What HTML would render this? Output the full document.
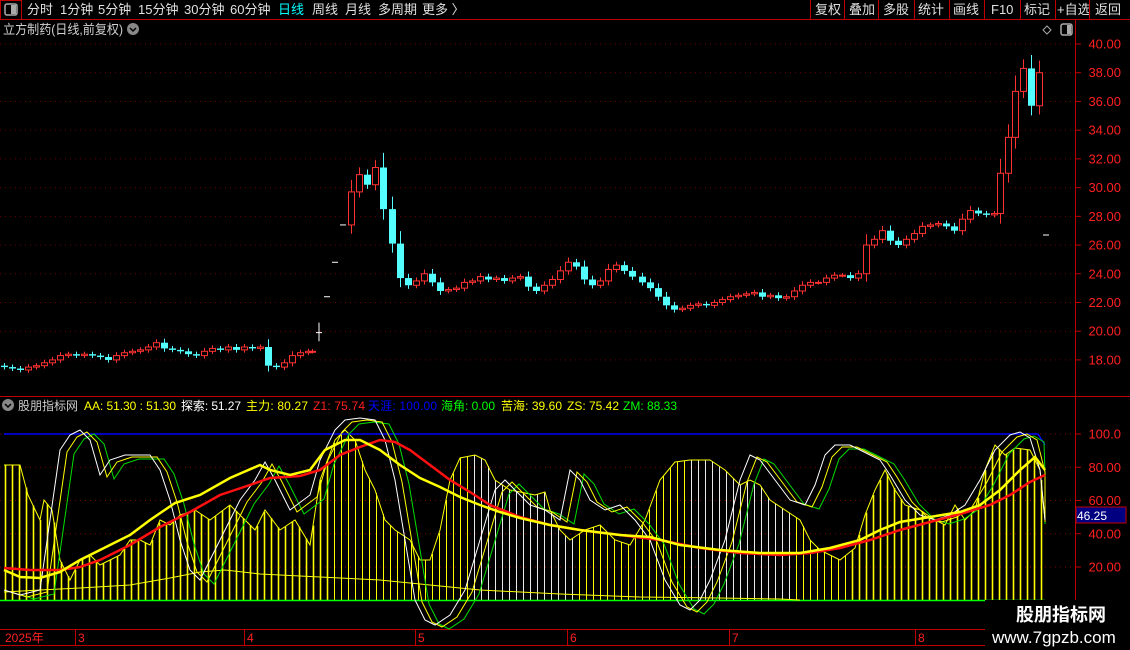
<!DOCTYPE html><html><head><meta charset="utf-8"><style>
body{margin:0;background:#000;width:1130px;height:650px;overflow:hidden;font-family:"Liberation Sans","Noto Sans CJK SC",sans-serif;}
svg{display:block}
text{font-family:"Liberation Sans","Noto Sans CJK SC",sans-serif}
</style></head><body>
<svg id="s" width="1130" height="650" xmlns="http://www.w3.org/2000/svg">
<rect width="1130" height="650" fill="#000"/>
<line x1="0" y1="19.5" x2="1130" y2="19.5" stroke="#c00000"/>
<rect x="0.5" y="0.5" width="21" height="19" fill="none" stroke="#c00000"/>
<rect x="5" y="4" width="12" height="11" rx="2" fill="none" stroke="#aaa" stroke-width="1.5"/><rect x="11" y="5" width="5" height="9" fill="#aaa"/>
<g font-size="13" fill="#e0e0e0">
<text x="27" y="14">分时</text><text x="60" y="14">1分钟</text><text x="98" y="14">5分钟</text><text x="138" y="14">15分钟</text><text x="184" y="14">30分钟</text><text x="230" y="14">60分钟</text>
<text x="278" y="14" fill="#00ffff">日线</text><text x="312" y="14">周线</text><text x="345" y="14">月线</text><text x="378" y="14">多周期</text><text x="422" y="14">更多 〉</text>
<text x="815" y="14">复权</text><text x="849" y="14">叠加</text><text x="883" y="14">多股</text><text x="918" y="14">统计</text><text x="953" y="14">画线</text><text x="991" y="14">F10</text><text x="1024" y="14">标记</text><text x="1057" y="14">+自选</text><text x="1095" y="14">返回</text>
</g>
<g stroke="#c00000"><line x1="810.5" y1="0" x2="810.5" y2="19"/><line x1="844.5" y1="0" x2="844.5" y2="19"/><line x1="878.5" y1="0" x2="878.5" y2="19"/><line x1="914.5" y1="0" x2="914.5" y2="19"/><line x1="949.5" y1="0" x2="949.5" y2="19"/><line x1="984.5" y1="0" x2="984.5" y2="19"/><line x1="1020.5" y1="0" x2="1020.5" y2="19"/><line x1="1055.5" y1="0" x2="1055.5" y2="19"/><line x1="1089.5" y1="0" x2="1089.5" y2="19"/></g>
<line x1="1075.5" y1="20" x2="1075.5" y2="630" stroke="#c00000"/>
<line x1="0" y1="396.5" x2="1130" y2="396.5" stroke="#c00000"/>
<line x1="0" y1="629.5" x2="1130" y2="629.5" stroke="#c00000"/>
<line x1="0" y1="645.5" x2="1075" y2="645.5" stroke="#c00000"/>
<text x="3" y="34" font-size="13" fill="#d0d0d0" textLength="120" lengthAdjust="spacingAndGlyphs">立方制药(日线,前复权)</text>
<circle cx="133" cy="29" r="6" fill="#888"/><path d="M130 28l3 3 3-3" stroke="#000" stroke-width="1.5" fill="none"/>
<path d="M1047 26l4 4-4 4-4-4z" fill="none" stroke="#aaa"/>
<rect x="1061" y="24" width="11" height="11" rx="2" fill="none" stroke="#aaa" stroke-width="1.5"/><rect x="1067" y="25" width="4" height="9" fill="#aaa"/>
<circle cx="8" cy="405" r="6" fill="#888"/><path d="M5 404l3 3 3-3" stroke="#000" stroke-width="1.5" fill="none"/>
<g font-size="12">
<text x="18" y="410" fill="#ccc" textLength="60">股朋指标网</text>
<text x="84" y="410" fill="#ffff00" textLength="92">AA: 51.30 : 51.30</text>
<text x="181" y="410" fill="#fff" textLength="60">探索: 51.27</text>
<text x="246" y="410" fill="#ffff00" textLength="62">主力: 80.27</text>
<text x="313" y="410" fill="#ff2020" textLength="52">Z1: 75.74</text>
<text x="368" y="410" fill="#0000ff" textLength="69">天涯: 100.00</text>
<text x="441" y="410" fill="#00ff00" textLength="54">海角: 0.00</text>
<text x="501" y="410" fill="#ffff00" textLength="61">苦海: 39.60</text>
<text x="567" y="410" fill="#ffff00" textLength="52">ZS: 75.42</text>
<text x="623" y="410" fill="#00ff00" textLength="54">ZM: 88.33</text>
</g>
<g id="g"></g>
<rect x="1076" y="507" width="50" height="16" fill="#000080" stroke="#c00000"/>
<text x="1077" y="520" font-size="12" fill="#fff">46.25</text>
<g font-size="12" fill="#ff2020"><text x="5" y="642">2025年</text><text x="78" y="642">3</text><text x="247" y="642">4</text><text x="418" y="642">5</text><text x="570" y="642">6</text><text x="732" y="642">7</text><text x="918" y="642">8</text></g>
<g stroke="#c00000"><line x1="75.5" y1="630" x2="75.5" y2="645"/><line x1="244.5" y1="630" x2="244.5" y2="645"/><line x1="415.5" y1="630" x2="415.5" y2="645"/><line x1="567.5" y1="630" x2="567.5" y2="645"/><line x1="729.5" y1="630" x2="729.5" y2="645"/><line x1="915.5" y1="630" x2="915.5" y2="645"/></g>
<rect x="985" y="600" width="145" height="50" fill="#000"/>
<text x="1016" y="621" font-size="18" font-weight="bold" fill="#fff">股朋指标网</text>
<text x="992" y="643" font-size="17" fill="#fff">www.7gpzb.com</text>
</svg>
<script>
var g=document.getElementById('g'),h='';
function py(p){return 44+(40-p)*14.36}
function iy(v){return 600.25-v*1.6625}
for(var p=40;p>=18;p-=2){var y=py(p);h+='<line x1="0" y1="'+y+'" x2="1075" y2="'+y+'" stroke="#600" stroke-dasharray="1,4"/>';h+='<line x1="1075" y1="'+y+'" x2="1081" y2="'+y+'" stroke="#c00000"/>';h+='<text x="1121" y="'+(y+4.5)+'" font-size="13" fill="#ff2020" text-anchor="end">'+p.toFixed(2)+'</text>'}
[100,80,60,40,20].forEach(function(v){var y=iy(v);h+='<line x1="0" y1="'+y+'" x2="1075" y2="'+y+'" stroke="#700" stroke-dasharray="1,4"/>';h+='<line x1="1075" y1="'+y+'" x2="1081" y2="'+y+'" stroke="#c00000"/>';h+='<text x="1121" y="'+(y+4.5)+'" font-size="13" fill="#ff2020" text-anchor="end">'+(v==100?'100.0':v.toFixed(2))+'</text>'});
var c=[[4,17.5],[12,17.4],[20,17.3],[28,17.5],[36,17.6],[44,17.8],[52,18.0],[60,18.3],[68,18.4],[76,18.3],[84,18.4],[92,18.3],[100,18.2],[108,18.0],[116,18.3],[124,18.5],[132,18.6],[140,18.7],[148,18.9],[156,19.2],[164,18.8],[172,18.7],[180,18.6],[188,18.4],[196,18.3],[204,18.6],[212,18.8],[220,18.7],[228,18.9],[236,18.7],[244,18.9],[252,18.8],[260,18.9],[268,17.6],[276,17.5],[284,17.8],[292,18.3],[300,18.5],[308,18.6],[312,18.6],[319,19.9,1],[327,22.4,1],[335,24.8,1],[343,27.4,1],[351,29.7],[359,30.9],[367,30.2],[375,31.4],[383,28.5],[392,26.1],[400,23.7],[408,23.2],[416,23.5],[424,24.0],[432,23.4],[440,22.8],[448,22.9],[456,23.0],[464,23.4],[472,23.5],[480,23.8],[488,23.6],[496,23.7],[504,23.5],[512,23.7],[520,23.8],[528,23.1],[536,22.8],[544,23.2],[552,23.6],[560,24.2],[568,24.8],[576,24.5],[584,23.6],[592,23.2],[600,23.5],[608,24.3],[616,24.6],[624,24.2],[632,23.8],[642,23.4],[650,23.0],[658,22.4],[666,21.8],[674,21.5],[682,21.6],[690,21.8],[698,21.9],[706,21.8],[714,22.0],[722,22.2],[730,22.4],[738,22.5],[746,22.6],[754,22.7],[762,22.4],[770,22.5],[778,22.3],[786,22.4],[794,22.8],[802,23.2],[810,23.4],[818,23.4],[826,23.7],[834,23.9],[842,23.9],[850,23.7],[858,24.0],[866,26.0],[874,26.4],[882,27.0],[890,26.3],[898,26.0],[906,26.4],[914,26.8],[922,27.3],[930,27.4],[938,27.5],[946,27.3],[954,27.0],[962,27.8],[970,28.4],[978,28.2],[986,28.1],[994,28.2],[1000,31.0],[1008,33.5],[1015,36.7],[1023,38.3],[1031,35.7],[1039,38.0],[1046,26.7,1]];
var prev=17.6;
c.forEach(function(d){var x=d[0],cl=d[1];if(d[2]){var y=py(cl);h+='<line x1="'+(x-3)+'" y1="'+y+'" x2="'+(x+3)+'" y2="'+y+'" stroke="#fff"/>';if(x==319)h+='<line x1="'+x+'" y1="'+py(20.6)+'" x2="'+x+'" y2="'+py(19.3)+'" stroke="#fff"/>';prev=cl;return}
var o=prev,up=cl>=o,t=Math.max(o,cl),b=Math.min(o,cl),rng=Math.abs(cl-o);var hi=t+0.15+rng*0.3,lo=b-0.15-rng*0.2;
var col=up?'#ff3232':'#54ffff';h+='<line x1="'+(x+.5)+'" y1="'+py(hi)+'" x2="'+(x+.5)+'" y2="'+py(lo)+'" stroke="'+col+'"/>';
var bh=Math.max(1,py(b)-py(t));if(up)h+='<rect x="'+(x-2.5)+'" y="'+py(t)+'" width="6" height="'+bh+'" fill="#000" stroke="'+col+'"/>';else h+='<rect x="'+(x-3)+'" y="'+py(t)+'" width="7" height="'+bh+'" fill="'+col+'"/>';prev=cl});
function interp(pts,x){for(var i=0;i<pts.length-1;i++){if(x>=pts[i][0]&&x<=pts[i+1][0]){var t=(x-pts[i][0])/((pts[i+1][0]-pts[i][0])||1);return pts[i][1]+t*(pts[i+1][1]-pts[i][1])}}return pts[pts.length-1][1]}
var env=[[4,465],[12,465],[20,465],[28,495],[40,520],[44,500],[52,510],[60,560],[70,580],[80,560],[90,555],[100,565],[110,560],[120,555],[130,540],[140,540],[150,545],[160,520],[170,525],[180,515],[195,510],[210,520],[230,505],[245,520],[255,530],[265,510],[280,530],[295,520],[310,545],[320,480],[335,440],[345,430],[355,440],[365,470],[375,490],[385,520],[395,530],[410,540],[420,560],[430,560],[440,530],[450,480],[460,458],[475,455],[485,460],[495,480],[510,490],[520,492],[535,495],[545,492],[550,510],[560,530],[570,540],[585,530],[600,525],[615,540],[630,545],[645,520],[660,480],[675,462],[690,460],[710,460],[725,470],[740,485],[750,480],[760,485],[770,500],[785,510],[800,520],[810,540],[820,550],[830,555],[840,560],[855,548],[865,515],[875,490],[885,470],[895,490],[905,505],[920,510],[935,520],[945,525],[955,505],[965,520],[975,510],[985,470],[995,445],[1005,455],[1015,448],[1030,450],[1040,470],[1045,520]];
for(var x=5;x<=1045;x+=7){var y=interp(env,x);var w=(x>470&&x<575)||(x>690&&x<795);var col=w?'#e8e8e8':'#ffff00';h+='<line x1="'+(x+.5)+'" y1="'+y+'" x2="'+(x+.5)+'" y2="600" stroke="'+col+'" stroke-width="'+((x>850||x<330)&&!w?1.6:1)+'"/>'}
h+='<polyline points="'+env.map(function(p){return p.join(',')}).join(' ')+'" fill="none" stroke="#ffff00"/>';
h+='<line x1="0" y1="600.5" x2="1045" y2="600.5" stroke="#00ff00" stroke-width="1.5"/>';
h+='<polyline points="4,434 1038,434 1045,445" fill="none" stroke="#0000ff" stroke-width="1.5"/>';
var low=[[4,592],[40,590],[80,588],[130,585],[170,578],[200,572],[225,570],[260,574],[300,576],[340,578],[380,580],[420,584],[480,590],[560,594],[640,597],[720,598],[780,599],[800,600]];
h+='<polyline points="'+low.map(function(p){return p.join(',')}).join(' ')+'" fill="none" stroke="#ffff00"/>';
var wo=[[4,590],[20,595],[40,590],[50,520],[60,450],[70,435],[80,430],[90,440],[100,475],[110,460],[125,455],[140,455],[150,455],[160,470],[170,500],[180,540],[190,570],[200,580],[210,560],[225,530],[240,500],[255,480],[265,462],[275,480],[290,510],[310,495],[320,460],[335,430],[345,420],[360,418],[375,420],[385,440],[395,480],[405,540],[415,600],[425,620],[435,625],[450,615],[465,590],[480,540],[495,490],[505,480],[515,490],[530,505],[545,510],[560,520],[570,470],[580,480],[590,500],[605,510],[620,505],[635,520],[650,540],[665,580],[680,605],[690,610],[700,600],[710,580],[725,540],[740,480],[750,455],[760,460],[775,480],[790,500],[805,505],[815,485],[825,455],[835,445],[850,445],[860,450],[870,455],[880,460],[890,475],[905,500],[920,515],[935,520],[950,515],[965,505],[980,480],[995,450],[1010,435],[1020,432],[1030,438],[1040,470],[1045,520]];
function sh(pts,dx,dy){return pts.map(function(p){return [Math.min(1045,p[0]+dx),p[1]+dy].join(',')}).join(' ')}
h+='<polyline points="'+sh(wo,14,4)+'" fill="none" stroke="#00dd00"/>';
h+='<polyline points="'+sh(wo,7,2)+'" fill="none" stroke="#ffff00"/>';
h+='<polyline points="'+sh(wo,0,0)+'" fill="none" stroke="#ffffff"/>';
var ty=[[4,570],[20,577],[40,578],[60,572],[80,560],[100,550],[130,535],[150,520],[175,503],[200,495],[230,478],[260,465],[270,470],[290,475],[310,470],[325,450],[345,440],[360,440],[380,450],[400,465],[420,478],[440,487],[460,497],[480,505],[500,512],[520,518],[550,525],[580,530],[620,535],[650,537],[680,545],[720,550],[760,553],[800,553],[830,548],[860,540],[880,530],[900,522],[930,517],[960,512],[980,505],[1000,490],[1020,470],[1035,457],[1045,470]];
var rd=[[4,568],[30,570],[60,570],[80,567],[100,560],[130,545],[160,527],[190,512],[220,495],[250,485],[270,478],[300,476],[320,470],[340,455],[360,447],[380,440],[395,442],[410,450],[430,465],[450,480],[470,492],[490,505],[520,517],[550,525],[580,530],[620,535],[660,540],[700,548],[740,553],[780,555],[810,553],[840,548],[870,540],[900,530],[930,522],[960,514],[990,505],[1010,495],[1030,482],[1045,475]];
h+='<polyline points="'+sh(rd,0,0)+'" fill="none" stroke="#ff1010" stroke-width="2.5"/>';
h+='<polyline points="'+sh(ty,0,0)+'" fill="none" stroke="#ffff00" stroke-width="2.5"/>';
g.innerHTML=h;
</script>
</body></html>
